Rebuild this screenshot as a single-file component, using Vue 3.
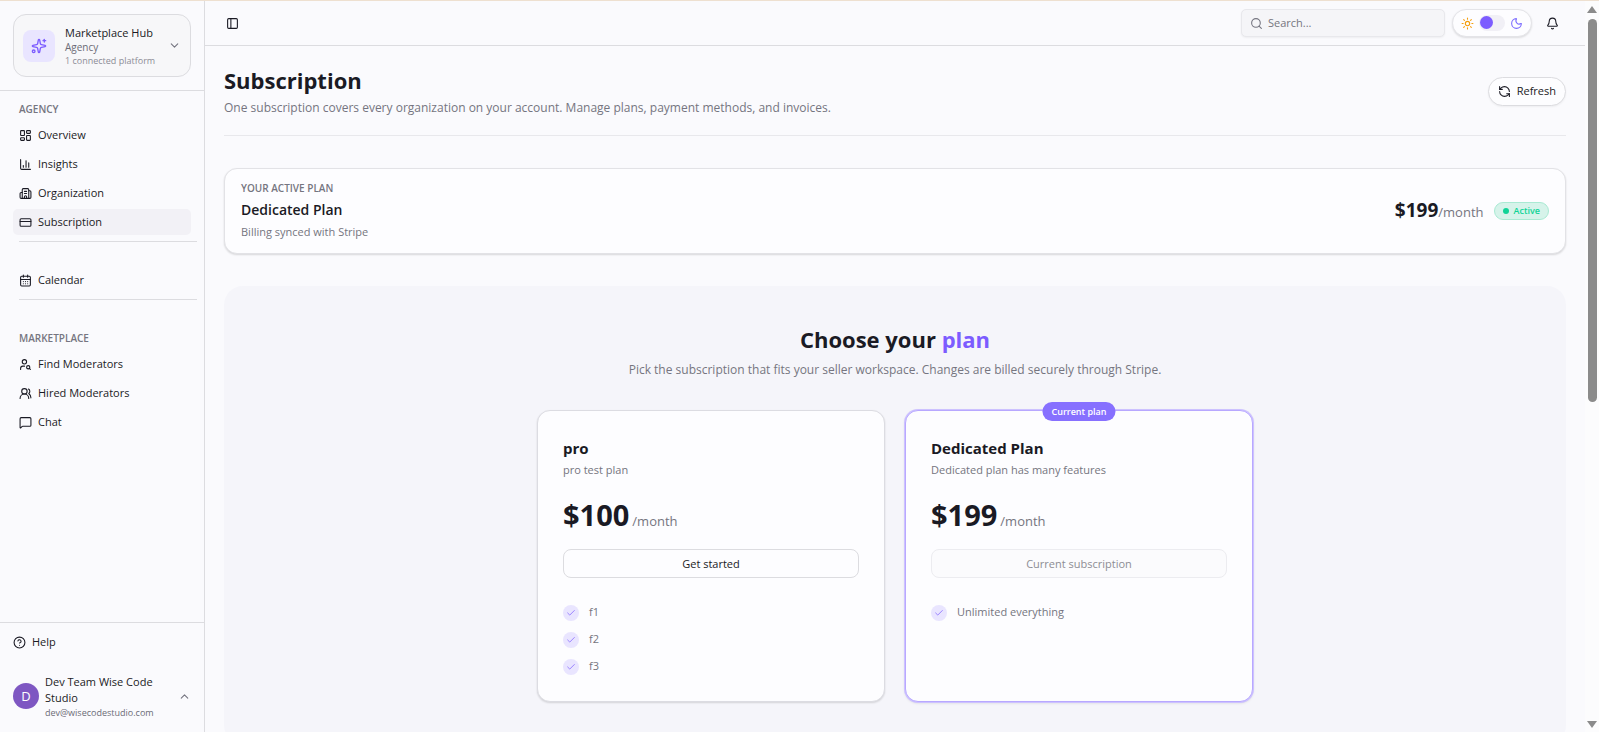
<template>
  <div class="app">
    <aside class="sidebar">
      <div class="sidebar-header">
        <button class="workspace" type="button">
          <span class="workspace-logo"><Icon name="sparkles" class="icon-md" /></span>
          <span class="workspace-text">
            <span class="workspace-name">Marketplace Hub</span>
            <span class="workspace-role">Agency</span>
            <span class="workspace-info">1 connected platform</span>
          </span>
          <Icon name="chevronDown" class="icon-sm muted" />
        </button>
      </div>

      <nav class="nav">
        <div v-for="(group, i) in navGroups" :key="i" class="nav-group">
          <h2 v-if="group.label" class="nav-label">{{ group.label }}</h2>
          <ul>
            <li v-for="item in group.items" :key="item.name">
              <a href="#" class="nav-link" :class="{ active: item.name === current }">
                <Icon :name="item.icon" class="icon-sm" />
                {{ item.name }}
              </a>
            </li>
          </ul>
        </div>
      </nav>

      <div class="sidebar-footer">
        <a href="#" class="help-link">
          <Icon name="help" class="icon-sm" />
          Help
        </a>
        <button class="user" type="button">
          <span class="avatar">D</span>
          <span class="user-text">
            <span class="user-name">Dev Team Wise Code Studio</span>
            <span class="user-email">dev@wisecodestudio.com</span>
          </span>
          <Icon name="chevronUp" class="icon-sm muted" />
        </button>
      </div>
    </aside>

    <div class="page">
      <header class="topbar">
        <button class="icon-btn" type="button" aria-label="Toggle sidebar">
          <Icon name="panel" class="icon-sm" />
        </button>
        <div class="topbar-actions">
          <label class="search">
            <Icon name="search" class="icon-sm" />
            <input v-model="query" type="text" placeholder="Search..." aria-label="Search" />
          </label>
          <label class="theme">
            <Icon name="sun" class="icon-sm sun" />
            <input v-model="dark" type="checkbox" role="switch" aria-label="Dark mode" />
            <Icon name="moon" class="icon-sm moon" />
          </label>
          <button class="icon-btn bell" type="button" aria-label="Notifications">
            <Icon name="bell" class="icon-sm" />
          </button>
        </div>
      </header>

      <main class="content">
        <div class="page-header">
          <div>
            <h1>Subscription</h1>
            <p>One subscription covers every organization on your account. Manage plans, payment methods, and invoices.</p>
          </div>
          <button class="refresh" type="button">
            <Icon name="refresh" class="icon-sm" />
            Refresh
          </button>
        </div>

        <section class="active-plan">
          <div class="active-plan-info">
            <span class="overline">YOUR ACTIVE PLAN</span>
            <h2>Dedicated Plan</h2>
            <p>Billing synced with Stripe</p>
          </div>
          <div class="active-plan-side">
            <div class="active-price"><strong>$199</strong><span>/month</span></div>
            <span class="status"><span class="status-dot"></span>Active</span>
          </div>
        </section>

        <section class="plans">
          <h2>Choose your <span>plan</span></h2>
          <p class="plans-lead">Pick the subscription that fits your seller workspace. Changes are billed securely through Stripe.</p>

          <div class="plan-grid">
            <article v-for="plan in plans" :key="plan.name" class="plan" :class="{ 'plan-current': plan.current }">
              <span v-if="plan.current" class="plan-badge">Current plan</span>
              <h3>{{ plan.name }}</h3>
              <p class="plan-desc">{{ plan.description }}</p>
              <div class="plan-price">
                <strong>${{ plan.price }}</strong>
                <span>/month</span>
              </div>
              <button type="button" class="plan-btn" :disabled="plan.current">
                {{ plan.current ? 'Current subscription' : 'Get started' }}
              </button>
              <ul class="features">
                <li v-for="feature in plan.features" :key="feature">
                  <span class="check"><Icon name="check" class="icon-xs" /></span>
                  {{ feature }}
                </li>
              </ul>
            </article>
          </div>
        </section>
      </main>
    </div>

    <div class="scrollbar" aria-hidden="true">
      <span class="arrow-up"></span>
      <span class="thumb"></span>
      <span class="arrow-down"></span>
    </div>
  </div>
</template>

<script setup>
import { h, ref } from 'vue'

const icons = {
  sparkles: [
    'M11.02 2.81a1 1 0 0 1 1.96 0l1.05 5.56a2 2 0 0 0 1.6 1.6l5.56 1.05a1 1 0 0 1 0 1.96l-5.56 1.05a2 2 0 0 0-1.6 1.6l-1.05 5.56a1 1 0 0 1-1.96 0l-1.05-5.56a2 2 0 0 0-1.6-1.6l-5.56-1.05a1 1 0 0 1 0-1.96l5.56-1.05a2 2 0 0 0 1.6-1.6z',
    'M20 2v4',
    'M22 4h-4',
    'M6 20a2 2 0 1 1-4 0 2 2 0 0 1 4 0z'
  ],
  chevronDown: ['m6 9 6 6 6-6'],
  chevronUp: ['m18 15-6-6-6 6'],
  overview: [
    'M4 3h5a1 1 0 0 1 1 1v7a1 1 0 0 1-1 1H4a1 1 0 0 1-1-1V4a1 1 0 0 1 1-1z',
    'M15 3h5a1 1 0 0 1 1 1v3a1 1 0 0 1-1 1h-5a1 1 0 0 1-1-1V4a1 1 0 0 1 1-1z',
    'M15 12h5a1 1 0 0 1 1 1v7a1 1 0 0 1-1 1h-5a1 1 0 0 1-1-1v-7a1 1 0 0 1 1-1z',
    'M4 16h5a1 1 0 0 1 1 1v3a1 1 0 0 1-1 1H4a1 1 0 0 1-1-1v-3a1 1 0 0 1 1-1z'
  ],
  insights: ['M3 3v16a2 2 0 0 0 2 2h16', 'M18 17V9', 'M13 17V5', 'M8 17v-3'],
  organization: [
    'M10 12h4',
    'M10 8h4',
    'M14 21v-3a2 2 0 0 0-4 0v3',
    'M6 10H4a2 2 0 0 0-2 2v7a2 2 0 0 0 2 2h16a2 2 0 0 0 2-2V9a2 2 0 0 0-2-2h-2',
    'M6 21V5a2 2 0 0 1 2-2h8a2 2 0 0 1 2 2v16'
  ],
  card: ['M4 5h16a2 2 0 0 1 2 2v10a2 2 0 0 1-2 2H4a2 2 0 0 1-2-2V7a2 2 0 0 1 2-2z', 'M2 10h20'],
  calendar: [
    'M8 2v4',
    'M16 2v4',
    'M5 4h14a2 2 0 0 1 2 2v14a2 2 0 0 1-2 2H5a2 2 0 0 1-2-2V6a2 2 0 0 1 2-2z',
    'M3 10h18',
    'M8 14h.01',
    'M12 14h.01',
    'M16 14h.01',
    'M8 18h.01',
    'M12 18h.01',
    'M16 18h.01'
  ],
  findUser: [
    'M14 7a4 4 0 1 1-8 0 4 4 0 0 1 8 0z',
    'M10.3 15H7a4 4 0 0 0-4 4v2',
    'M20 17a3 3 0 1 1-6 0 3 3 0 0 1 6 0z',
    'm21 21-1.9-1.9'
  ],
  users: [
    'M18 21a8 8 0 0 0-16 0',
    'M15 8a5 5 0 1 1-10 0 5 5 0 0 1 10 0z',
    'M22 20c0-3.37-2-6.5-4-8a5 5 0 0 0-.45-8.3'
  ],
  chat: ['M22 17a2 2 0 0 1-2 2H6.83a2 2 0 0 0-1.42.59l-2.2 2.2A.7.7 0 0 1 2 21.3V5a2 2 0 0 1 2-2h16a2 2 0 0 1 2 2z'],
  help: ['M22 12a10 10 0 1 1-20 0 10 10 0 0 1 20 0z', 'M9.09 9a3 3 0 0 1 5.83 1c0 2-3 3-3 3', 'M12 17h.01'],
  panel: ['M5 3h14a2 2 0 0 1 2 2v14a2 2 0 0 1-2 2H5a2 2 0 0 1-2-2V5a2 2 0 0 1 2-2z', 'M9 3v18'],
  search: ['M19 11a8 8 0 1 1-16 0 8 8 0 0 1 16 0z', 'm21 21-4.34-4.34'],
  sun: [
    'M16 12a4 4 0 1 1-8 0 4 4 0 0 1 8 0z',
    'M12 2v2',
    'M12 20v2',
    'm4.93 4.93 1.41 1.41',
    'm17.66 17.66 1.41 1.41',
    'M2 12h2',
    'M20 12h2',
    'm6.34 17.66-1.41 1.41',
    'm19.07 4.93-1.41 1.41'
  ],
  moon: ['M20.99 12.49a9 9 0 1 1-9.47-9.47c.4-.02.62.46.4.8a6 6 0 0 0 8.27 8.27c.34-.21.82 0 .8.4'],
  bell: [
    'M10.27 21a2 2 0 0 0 3.46 0',
    'M3.26 15.33A1 1 0 0 0 4 17h16a1 1 0 0 0 .74-1.67C19.41 13.96 18 12.5 18 8A6 6 0 0 0 6 8c0 4.5-1.41 5.96-2.74 7.33'
  ],
  refresh: [
    'M21 12a9 9 0 0 0-9-9 9.75 9.75 0 0 0-6.74 2.74L3 8',
    'M3 3v5h5',
    'M3 12a9 9 0 0 0 9 9 9.75 9.75 0 0 0 6.74-2.74L21 16',
    'M16 16h5v5'
  ],
  check: ['M20 6 9 17l-5-5']
}

const Icon = (props) =>
  h(
    'svg',
    { class: 'icon', viewBox: '0 0 24 24', 'aria-hidden': 'true' },
    icons[props.name].map((d) => h('path', { d }))
  )
Icon.props = ['name']

const current = ref('Subscription')
const query = ref('')
const dark = ref(false)

const navGroups = [
  {
    label: 'AGENCY',
    items: [
      { name: 'Overview', icon: 'overview' },
      { name: 'Insights', icon: 'insights' },
      { name: 'Organization', icon: 'organization' },
      { name: 'Subscription', icon: 'card' }
    ]
  },
  { items: [{ name: 'Calendar', icon: 'calendar' }] },
  {
    label: 'MARKETPLACE',
    items: [
      { name: 'Find Moderators', icon: 'findUser' },
      { name: 'Hired Moderators', icon: 'users' },
      { name: 'Chat', icon: 'chat' }
    ]
  }
]

const plans = [
  { name: 'pro', description: 'pro test plan', price: 100, current: false, features: ['f1', 'f2', 'f3'] },
  {
    name: 'Dedicated Plan',
    description: 'Dedicated plan has many features',
    price: 199,
    current: true,
    features: ['Unlimited everything']
  }
]
</script>

<style>
body {
  margin: 0;
}
</style>

<style scoped>
.app {
  display: flex;
  height: 100vh;
  box-sizing: border-box;
  overflow: hidden;
  border-top: 1px solid #eee0d0;
  background: #fafafd;
  color: #1a1a24;
  font-family: 'Open Sans', 'Noto Sans', sans-serif;
  font-size: 11px;
  line-height: 16px;
}

h1,
h2,
h3,
p,
ul {
  margin: 0;
  padding: 0;
}

ul {
  list-style: none;
}

a {
  color: inherit;
  text-decoration: none;
}

button,
input {
  font: inherit;
  color: inherit;
}

button {
  cursor: pointer;
}

.icon {
  flex: none;
  fill: none;
  stroke: currentColor;
  stroke-width: 2;
  stroke-linecap: round;
  stroke-linejoin: round;
}

.icon-xs {
  width: 10px;
  height: 10px;
}

.icon-sm {
  width: 13px;
  height: 13px;
}

.icon-md {
  width: 16px;
  height: 16px;
}

.muted {
  color: #757580;
}

/* Sidebar */
.sidebar {
  display: flex;
  flex-direction: column;
  flex: none;
  width: 205px;
  box-sizing: border-box;
  border-right: 1px solid #dcdce0;
}

.sidebar-header {
  padding: 13px;
  border-bottom: 1px solid #dcdce0;
}

.workspace {
  display: flex;
  align-items: center;
  gap: 10px;
  width: 100%;
  height: 63px;
  padding: 0 9px;
  border: 1px solid #dcdce0;
  border-radius: 13px;
  background: #f7f7f9;
  text-align: left;
}

.workspace-logo {
  display: flex;
  align-items: center;
  justify-content: center;
  flex: none;
  width: 32px;
  height: 32px;
  border-radius: 8px;
  background: #e9e5ff;
  color: #7c5cff;
}

.workspace-text {
  display: flex;
  flex-direction: column;
  flex: 1;
  white-space: nowrap;
}

.workspace-name {
  font-weight: 500;
}

.workspace-role {
  font-size: 10px;
  line-height: 13px;
  color: #6b6b76;
}

.workspace-info {
  font-size: 9px;
  line-height: 13px;
  color: #8c8c96;
}

.nav {
  flex: 1;
  padding-top: 5px;
}

.nav-group + .nav-group {
  margin-top: 6px;
  padding-top: 26px;
  position: relative;
}

.nav-group + .nav-group::before {
  content: '';
  position: absolute;
  top: 0;
  left: 19px;
  right: 7px;
  border-top: 1px solid #dcdce0;
}

.nav-label {
  padding: 0 19px;
  font-size: 10px;
  font-weight: 600;
  line-height: 26px;
  color: #757580;
}

.nav-group ul {
  display: flex;
  flex-direction: column;
  gap: 3px;
  padding: 0 13px;
}

.nav-link {
  display: flex;
  align-items: center;
  gap: 6px;
  height: 26px;
  padding: 0 6px;
  border-radius: 5px;
}

.nav-link.active {
  background: #f2f1f6;
  font-weight: 500;
}

.sidebar-footer {
  display: flex;
  flex-direction: column;
  gap: 12px;
  padding: 6px 13px 7px;
  border-top: 1px solid #dcdce0;
}

.help-link {
  display: flex;
  align-items: center;
  gap: 6px;
  height: 26px;
}

.user {
  display: flex;
  align-items: center;
  gap: 6px;
  height: 58px;
  padding: 0;
  border: 0;
  background: none;
  text-align: left;
}

.avatar {
  flex: none;
  width: 26px;
  height: 26px;
  border-radius: 50%;
  background: #7e57c2;
  color: #fff;
  font-size: 13px;
  line-height: 26px;
  text-align: center;
}

.user-text {
  display: flex;
  flex-direction: column;
  flex: 1;
}

.user-name {
  font-weight: 500;
}

.user-email {
  font-size: 9px;
  line-height: 13px;
  color: #6b6b76;
}

/* Top bar */
.page {
  display: flex;
  flex-direction: column;
  flex: 1;
  min-width: 0;
}

.topbar {
  display: flex;
  align-items: center;
  justify-content: space-between;
  flex: none;
  height: 44px;
  padding: 0 20px 0 14px;
  border-bottom: 1px solid #dcdce0;
}

.topbar-actions {
  display: flex;
  align-items: center;
  gap: 7px;
}

.icon-btn {
  display: flex;
  align-items: center;
  justify-content: center;
  width: 26px;
  height: 26px;
  padding: 0;
  border: 0;
  background: none;
}

.search {
  display: flex;
  align-items: center;
  gap: 5px;
  width: 204px;
  height: 28px;
  box-sizing: border-box;
  padding: 0 8px;
  border: 1px solid #e8e8ec;
  border-radius: 5px;
  background: #f5f5f8;
  color: #757580;
  box-shadow: 0 1px 2px rgba(0, 0, 0, 0.05);
}

.search input {
  flex: 1;
  min-width: 0;
  padding: 0;
  border: 0;
  outline: 0;
  background: none;
}

.search input::placeholder {
  color: #757580;
}

.theme {
  display: flex;
  align-items: center;
  gap: 5px;
  height: 28px;
  box-sizing: border-box;
  padding: 0 8px;
  border: 1px solid #e4e4e8;
  border-radius: 14px;
  background: #fdfdff;
  box-shadow: 0 1px 2px rgba(0, 0, 0, 0.12);
}

.theme input {
  appearance: none;
  width: 26px;
  height: 16px;
  margin: 0;
  padding: 1px;
  box-sizing: border-box;
  border-radius: 8px;
  background: #f1f0f6;
}

.theme input::before {
  content: '';
  display: block;
  width: 13px;
  height: 13px;
  border-radius: 50%;
  background: #7c5cff;
}

.theme input:checked::before {
  margin-left: auto;
}

.sun {
  color: #f59e0b;
}

.moon {
  color: #7c6cff;
}

/* Page content */
.content {
  padding: 18px 19px 0;
}

.page-header {
  display: flex;
  align-items: center;
  justify-content: space-between;
  padding-bottom: 17px;
  border-bottom: 1px solid #e8e8ec;
}

.page-header h1 {
  margin-bottom: 2px;
  font-size: 22px;
  font-weight: 700;
  line-height: 32px;
}

.page-header p,
.plans-lead {
  font-size: 12px;
  line-height: 20px;
  color: #757580;
}

.refresh {
  display: flex;
  align-items: center;
  gap: 6px;
  height: 29px;
  padding: 0 9px;
  border: 1px solid #dcdce0;
  border-radius: 15px;
  background: #fdfdff;
  font-weight: 500;
  box-shadow: 0 1px 2px rgba(0, 0, 0, 0.05);
}

.active-plan {
  display: flex;
  align-items: center;
  justify-content: space-between;
  margin-top: 32px;
  padding: 11px 16px 13px;
  border: 1px solid #e2e2e6;
  border-radius: 13px;
  background: #fdfdff;
  box-shadow: 0 1px 2px rgba(0, 0, 0, 0.14);
}

.active-plan-info {
  display: flex;
  flex-direction: column;
  gap: 4px;
}

.overline {
  font-size: 10px;
  font-weight: 600;
  color: #757580;
}

.active-plan h2 {
  font-size: 14px;
  font-weight: 600;
  line-height: 20px;
}

.active-plan p {
  color: #757580;
}

.active-plan-side {
  display: flex;
  align-items: center;
  gap: 10px;
  padding-top: 2px;
}

.active-price {
  font-size: 13px;
  line-height: 24px;
  color: #757580;
}

.active-price strong {
  font-size: 19px;
  color: #1a1a24;
}

.status {
  display: flex;
  align-items: center;
  gap: 5px;
  padding: 0 8px;
  border: 1px solid #a9ead3;
  border-radius: 9px;
  background: #d6f3ea;
  color: #10d397;
  font-size: 9px;
  font-weight: 600;
}

.status-dot {
  width: 6px;
  height: 6px;
  border-radius: 50%;
  background: #10d397;
}

.plans {
  margin-top: 32px;
  padding: 37px 19px 42px;
  border-radius: 19px;
  background: #f5f5fa;
  text-align: center;
}

.plans h2 {
  margin-bottom: 5px;
  font-size: 22px;
  font-weight: 700;
  line-height: 32px;
}

.plans h2 span {
  color: #7c5cff;
}

.plan-grid {
  display: grid;
  grid-template-columns: repeat(2, 1fr);
  gap: 20px;
  max-width: 716px;
  margin: 30px auto 0;
  text-align: left;
}

.plan {
  position: relative;
  padding: 25px;
  border: 1px solid #dcdce2;
  border-radius: 13px;
  background: #fdfdff;
  box-shadow: 0 1px 2px rgba(0, 0, 0, 0.14);
}

.plan-current {
  border-color: #b8a8ff;
  box-shadow: 0 0 0 1px #cdc2ff, 0 1px 3px rgba(0, 0, 0, 0.14);
}

.plan-badge {
  position: absolute;
  top: -9px;
  left: 50%;
  transform: translateX(-50%);
  padding: 0 9px;
  border-radius: 10px;
  background: #8770ff;
  color: #fff;
  font-size: 9px;
  font-weight: 600;
  line-height: 19px;
  white-space: nowrap;
}

.plan h3 {
  font-size: 15px;
  font-weight: 700;
  line-height: 24px;
}

.plan-desc {
  margin-top: 2px;
  color: #757580;
}

.plan-price {
  display: flex;
  align-items: baseline;
  gap: 3px;
  margin: 17px 0 14px;
}

.plan-price strong {
  font-size: 29px;
  line-height: 40px;
}

.plan-price span {
  font-size: 13px;
  color: #757580;
}

.plan-btn {
  width: 100%;
  height: 29px;
  border: 1px solid #dcdce0;
  border-radius: 8px;
  background: #fdfdff;
  font-weight: 500;
}

.plan-btn:disabled {
  border-color: #ececf0;
  background: #fbfbfd;
  color: #8d8d94;
  cursor: default;
}

.features {
  display: flex;
  flex-direction: column;
  gap: 9px;
  margin-top: 26px;
  color: #757580;
}

.features li {
  display: flex;
  gap: 10px;
  height: 18px;
}

.check {
  display: flex;
  align-items: center;
  justify-content: center;
  width: 16px;
  height: 16px;
  margin-top: 1px;
  border-radius: 50%;
  background: #e9e5ff;
  color: #8b70ff;
}

/* Scrollbar */
.scrollbar {
  display: flex;
  flex-direction: column;
  align-items: center;
  flex: none;
  width: 14px;
  padding: 5px 0 4px;
  box-sizing: border-box;
  background: #fcfcfd;
}

.arrow-up,
.arrow-down {
  border: 5px solid transparent;
}

.arrow-up {
  border-top: 0;
  border-bottom: 7px solid #8b8b8b;
}

.arrow-down {
  margin-top: auto;
  border-bottom: 0;
  border-top: 7px solid #8b8b8b;
}

.thumb {
  width: 9px;
  height: 53%;
  margin-top: 6px;
  border-radius: 5px;
  background: #8b8b8b;
}
</style>
